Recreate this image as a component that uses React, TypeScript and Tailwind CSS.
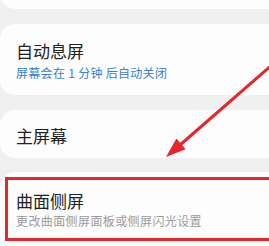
const font = { fontFamily: '"Noto Sans CJK SC", "Noto Sans", sans-serif' };

function ArrowOverlay() {
  return (
    <svg
      className="pointer-events-none absolute left-0 top-0"
      width="269"
      height="246"
      viewBox="0 0 269 246"
    >
      <line x1="272" y1="65" x2="180" y2="145" stroke="#e5262c" strokeWidth="3" />
      <polygon points="166,157 176.4,138.6 185.6,149.2" fill="#e5262c" />
    </svg>
  );
}

export default function App() {
  return (
    <div
      className="relative h-[246px] w-[269px] overflow-hidden bg-[#f0f0f0]"
      style={font}
    >
      <div className="flex w-[300px] flex-col gap-[15px]">
        <div className="-mt-[30px] h-[39px] rounded-[15px] bg-[#fdfdfd]" />

        <div className="rounded-[15px] bg-[#fdfdfd] pb-[14px] pl-4 pt-[16px]">
          <div className="text-[17px] leading-[22px] text-[#222]">自动息屏</div>
          <div className="mt-[3px] text-[12px] leading-[16px] tracking-[0.3px] text-[#3580d4]">
            屏幕会在 1 分钟 后自动关闭
          </div>
        </div>

        <div className="rounded-[15px] bg-[#fdfdfd] pb-[11px] pl-4 pt-[15px]">
          <div className="text-[17px] leading-[22px] text-[#222]">主屏幕</div>
        </div>

        <div className="-mt-[1px] h-[90px] rounded-[15px] bg-[#fdfdfd] pl-[5px] pt-[5px]">
          <div className="border-[3px] border-[#e5262c] pb-[9px] pl-[8px] pt-[10px]">
            <div className="text-[17px] leading-[22px] text-[#222]">曲面侧屏</div>
            <div className="mt-[1px] text-[12px] leading-[16px] tracking-[0.4px] text-[#9a9a9a]">
              更改曲面侧屏面板或侧屏闪光设置
            </div>
          </div>
        </div>
      </div>
      <ArrowOverlay />
    </div>
  );
}
